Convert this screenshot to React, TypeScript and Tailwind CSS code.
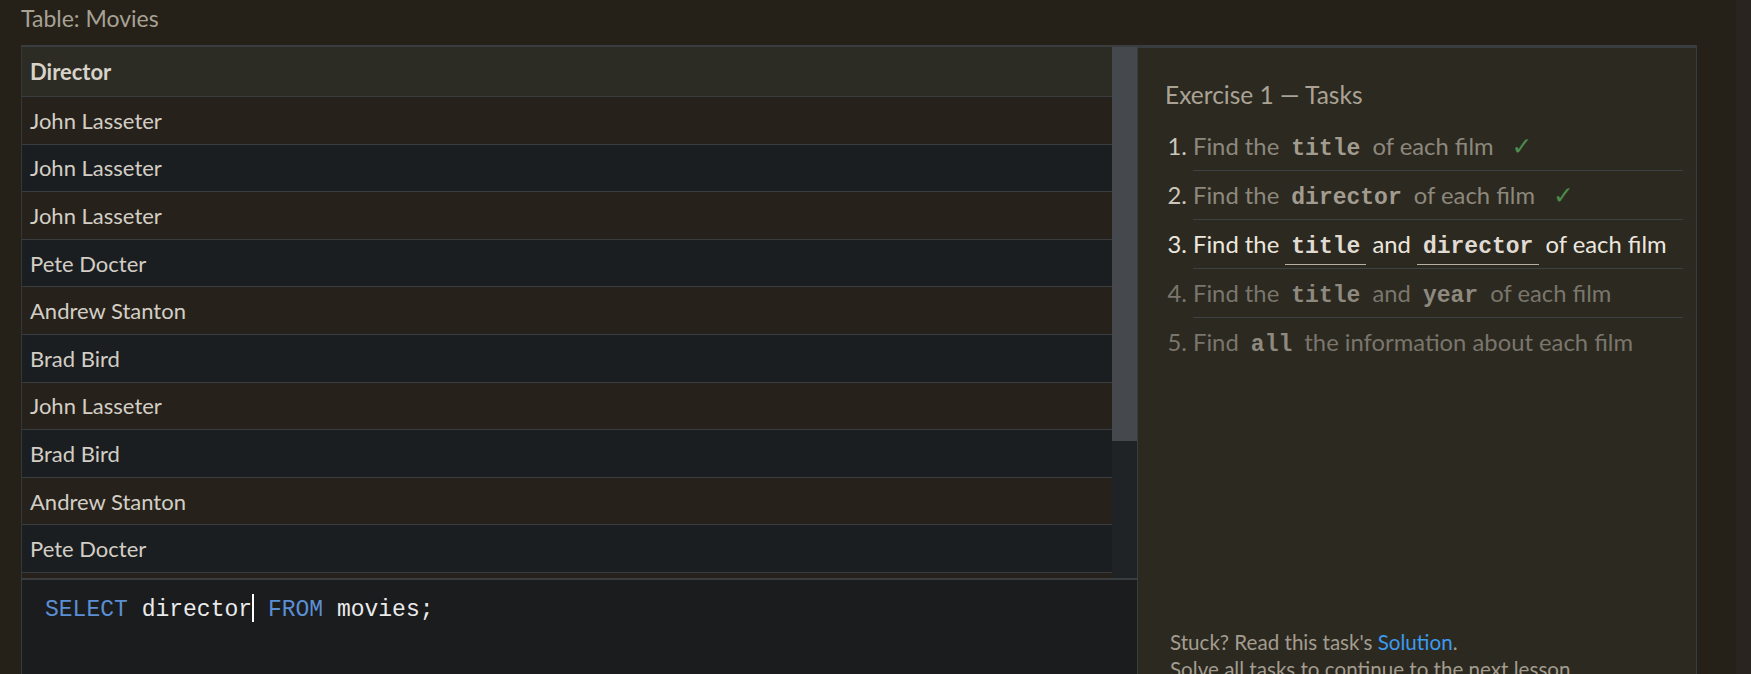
import React from 'react'

const directors = [
  'John Lasseter',
  'John Lasseter',
  'John Lasseter',
  'Pete Docter',
  'Andrew Stanton',
  'Brad Bird',
  'John Lasseter',
  'Brad Bird',
  'Andrew Stanton',
  'Pete Docter',
  'Lee Unkrich',
  'John Lasseter',
  'Brenda Chapman',
  'Dan Scanlon',
]

type Part = string | { code: string }

interface TaskItem {
  parts: Part[]
  state: 'done' | 'current' | 'todo'
}

const tasks: TaskItem[] = [
  { parts: ['Find the ', { code: 'title' }, ' of each film'], state: 'done' },
  { parts: ['Find the ', { code: 'director' }, ' of each film'], state: 'done' },
  { parts: ['Find the ', { code: 'title' }, ' and ', { code: 'director' }, ' of each film'], state: 'current' },
  { parts: ['Find the ', { code: 'title' }, ' and ', { code: 'year' }, ' of each film'], state: 'todo' },
  { parts: ['Find ', { code: 'all' }, ' the information about each film'], state: 'todo' },
]

const sans = "font-['Lato','Noto_Sans',sans-serif]"
const mono = "font-['Liberation_Mono','DejaVu_Sans_Mono',monospace]"

function ResultTable() {
  return (
    <div className="flex h-[531px] overflow-hidden border-l border-[#34373a]">
      <div className="flex-1 min-w-0">
        <div className="h-[50px] flex items-center pl-2 bg-[#2c2b24] border-b border-[#3a3d40] text-[22px] font-bold text-[#d8d2c8]">
          Director
        </div>
        {directors.map((d, i) => (
          <div
            key={i}
            className={[
              'h-[47.6px] flex items-center pl-2 border-b border-[#3a3d40] text-[22px] text-[#d3cec5]',
              i % 2 === 0 ? 'bg-[#26221b]' : 'bg-[#1b1e20]',
            ].join(' ')}
          >
            {d}
          </div>
        ))}
      </div>
      {/* scrollbar */}
      <div className="w-[25px] flex-shrink-0 bg-[#202325]">
        <div className="h-[394px] bg-[#45494d]" />
      </div>
    </div>
  )
}

function Editor() {
  return (
    <div className="flex-1 bg-[#1b1c1e] border-t-2 border-l border-[#3a3d40] pl-[23px] pt-[15px]">
      <div className={`${mono} text-[23px] leading-[30px] whitespace-pre text-[#ebebeb]`}>
        <span className="text-[#5b8fd4]">SELECT</span>
        {' director'}
        <span className="inline-block w-[2px] h-[28px] bg-white align-middle -mt-[3px]" />
        {' '}
        <span className="text-[#5b8fd4]">FROM</span>
        {' movies;'}
      </div>
    </div>
  )
}

function TaskRow({ item }: { item: TaskItem }) {
  const textColor =
    item.state === 'current' ? 'text-[#ece7de]' : item.state === 'done' ? 'text-[#8d887d]' : 'text-[#7a766d]'
  const markerColor =
    item.state === 'current' ? 'marker:text-[#ece7de]' : item.state === 'done' ? 'marker:text-[#cdc7bb]' : 'marker:text-[#7a766d]'
  const codeColor =
    item.state === 'current' ? 'text-[#e0dbd2] border-b border-[#b5afa4]' : item.state === 'done' ? 'text-[#a29c90]' : 'text-[#8f8a80]'

  return (
    <li className={`py-[9px] leading-[30px] h-[49px] border-b border-[#3d4143] last:border-b-0 ${textColor} ${markerColor}`}>
      {item.parts.map((p, i) =>
        typeof p === 'string' ? (
          <span key={i}>{p}</span>
        ) : (
          <code key={i} className={`${mono} font-bold text-[23px] leading-none px-[6px] pb-[4px] ${codeColor}`}>
            {p.code}
          </code>
        )
      )}
      {item.state === 'done' && (
        <span className="ml-[18px] leading-none text-[#4b8b4b] font-['DejaVu_Sans',sans-serif] text-[25px]">✓</span>
      )}
    </li>
  )
}

function TasksPanel() {
  return (
    <div className="w-[560px] flex-shrink-0 bg-[#2c2920] border-l border-r border-t border-[#3a3d40] pl-[27px] pr-[13px] pt-[32px]">
      <div className="text-[24.5px] leading-[30px] text-[#aaa395]">Exercise 1 — Tasks</div>
      <ol className="list-decimal pl-[28px] mt-[12px] text-[23.8px]">
        {tasks.map((t, i) => (
          <TaskRow key={i} item={t} />
        ))}
      </ol>
      <div className="mt-[262px] pl-[5px] text-[20.6px] leading-[27px] text-[#a39d90]">
        <div>
          Stuck? Read this task's <span className="text-[#3b9bf0]">Solution</span>.
        </div>
        <div>Solve all tasks to continue to the next lesson.</div>
      </div>
    </div>
  )
}

export default function App() {
  return (
    <div className={`${sans} flex h-[674px] w-[1751px] overflow-hidden bg-[#252119]`}>
      <div className="flex-1 pl-[21px] flex flex-col min-w-0">
        <div className="h-[45px] flex-shrink-0 leading-[36px] text-[23px] text-[#a8a295]">Table: Movies</div>
        <div className="flex flex-1 min-h-0 w-[1676px] border-t-2 border-[#3a3d40]">
          <div className="flex-1 min-w-0 flex flex-col">
            <ResultTable />
            <Editor />
          </div>
          <TasksPanel />
        </div>
      </div>
      <div className="w-[15px] flex-shrink-0 bg-[#2a2420]" />
    </div>
  )
}
